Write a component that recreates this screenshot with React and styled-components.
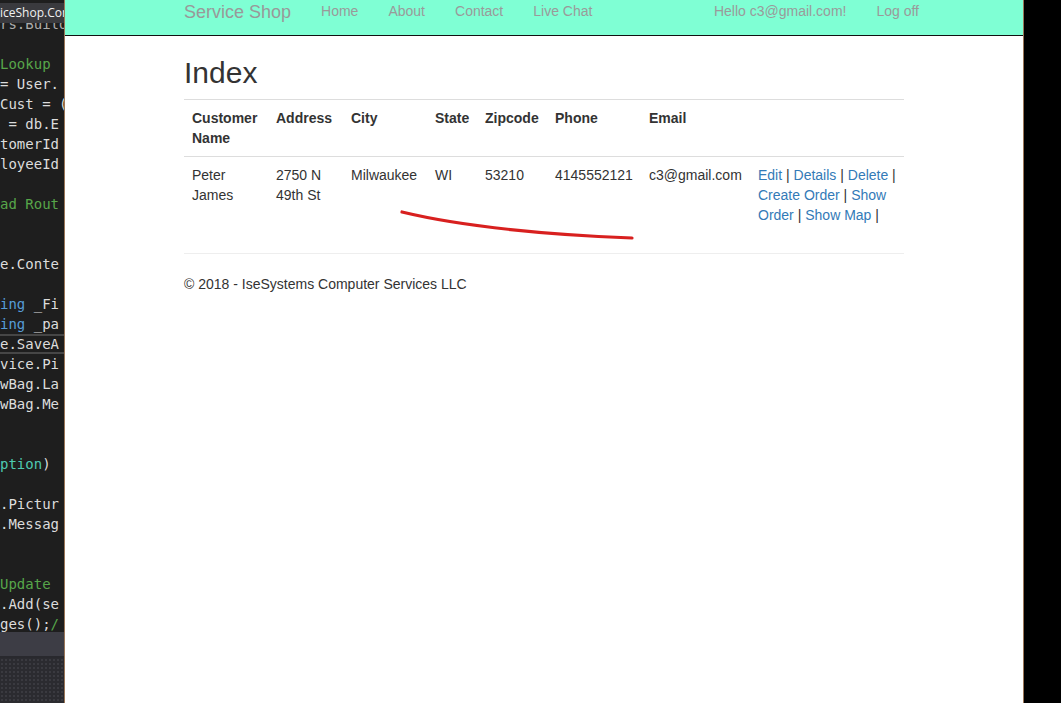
import React from "react"
import styled, { createGlobalStyle } from "styled-components"

const GlobalStyle = createGlobalStyle`
    html, body{
        margin: 0;
        padding: 0;
        height: 703px;
        overflow: hidden;
        background-color: #000000;
    }
    #root{
        height: 703px;
    }
`

const codeLines = [
    [],
    [["Lookup", "comment"]],
    [["= User.", "plain"]],
    [["Cust = (", "plain"]],
    [[" = db.E", "plain"]],
    [["tomerId", "plain"]],
    [["loyeeId", "plain"]],
    [],
    [["ad Rout", "comment"]],
    [],
    [],
    [["e.Conte", "plain"]],
    [],
    [["ing", "keyword"], [" _Fi", "plain"]],
    [["ing", "keyword"], [" _pa", "plain"]],
    [["e.SaveA", "plain"]],
    [["vice.Pi", "plain"]],
    [["wBag.La", "plain"]],
    [["wBag.Me", "plain"]],
    [],
    [],
    [["ption", "type"], [")", "plain"]],
    [],
    [[".Pictur", "plain"]],
    [[".Messag", "plain"]],
    [],
    [],
    [["Update", "comment"]],
    [[".Add(se", "plain"]],
    [["ges();", "plain"], ["/", "comment"]],
]

const colunas = [
    { titulo: "Customer Name", largura: 84 },
    { titulo: "Address", largura: 75 },
    { titulo: "City", largura: 84 },
    { titulo: "State", largura: 50 },
    { titulo: "Zipcode", largura: 70 },
    { titulo: "Phone", largura: 94 },
    { titulo: "Email", largura: 109 },
    { titulo: "", largura: 154 },
]

const customers = [
    {
        name: "Peter James",
        address: "2750 N 49th St",
        city: "Milwaukee",
        state: "WI",
        zip: "53210",
        phone: "4145552121",
        email: "c3@gmail.com",
    },
]

const acoes = ["Edit", "Details", "Delete", "Create Order", "Show Order", "Show Map"]

export default function App(){
    return(
        <>
            <GlobalStyle/>
            <Tela>
                <Editor>
                    <AbaEditor>iceShop.Con</AbaEditor>
                    <LinhaCortada><CodeLine>rs.Build</CodeLine></LinhaCortada>
                    <Codigo>
                        {codeLines.map((linha, i) => (
                            <CodeLine key={i} destaque={i === 15}>
                                {linha.map(([texto, tipo], j) => <Token key={j} tipo={tipo}>{texto}</Token>)}
                            </CodeLine>
                        ))}
                    </Codigo>
                    <BarraStatus/>
                    <Pontilhado/>
                </Editor>
                <Pagina>
                    <Navbar>
                        <NavInner>
                            <Marca>Service Shop</Marca>
                            <NavLink>Home</NavLink>
                            <NavLink>About</NavLink>
                            <NavLink>Contact</NavLink>
                            <NavLink>Live Chat</NavLink>
                            <NavDireita>
                                <NavLink>Hello c3@gmail.com!</NavLink>
                                <NavLink ultimo>Log off</NavLink>
                            </NavDireita>
                        </NavInner>
                    </Navbar>
                    <Conteudo>
                        <Titulo>Index</Titulo>
                        <Tabela>
                            <colgroup>
                                {colunas.map((c, i) => <col key={i} style={{ width: c.largura }}/>)}
                            </colgroup>
                            <tbody>
                                <tr>
                                    {colunas.map((c, i) => <Th key={i}>{c.titulo}</Th>)}
                                </tr>
                                {customers.map((c) => (
                                    <tr key={c.email}>
                                        <Td>{c.name}</Td>
                                        <Td>{c.address}</Td>
                                        <Td>{c.city}</Td>
                                        <Td>{c.state}</Td>
                                        <Td>{c.zip}</Td>
                                        <Td semQuebra>{c.phone}</Td>
                                        <Td semQuebra>{c.email}</Td>
                                        <Td>
                                            {acoes.map((a) => (
                                                <React.Fragment key={a}>
                                                    <Link href="#">{a}</Link> |{" "}
                                                </React.Fragment>
                                            ))}
                                        </Td>
                                    </tr>
                                ))}
                            </tbody>
                        </Tabela>
                        <Separador/>
                        <Rodape>© 2018 - IseSystems Computer Services LLC</Rodape>
                    </Conteudo>
                    <Risco width="958" height="703" viewBox="0 0 958 703">
                        <path d="M337 212 Q 420 232 567 238" fill="none" stroke="#d8201f" strokeWidth="3.2" strokeLinecap="round"/>
                    </Risco>
                </Pagina>
                <Fundo/>
            </Tela>
        </>
    )
}

const Tela = styled.div`
    display: flex;
    height: 703px;
    width: 1061px;
    overflow: hidden;
`

const Editor = styled.div`
    width: 64px;
    flex-shrink: 0;
    display: flex;
    flex-direction: column;
    background-color: #1e1e1e;
    border-right: 1px solid #9a7658;
    overflow: hidden;
    font-family: "DejaVu Sans Mono", "Liberation Mono", monospace;
`

const AbaEditor = styled.div`
    height: 20px;
    margin-top: 3px;
    background-color: #3a3a3e;
    color: #f1f1f1;
    font-family: "Open Sans", "Noto Sans", sans-serif;
    font-size: 12px;
    line-height: 20px;
    white-space: nowrap;
    overflow: hidden;
`

const LinhaCortada = styled.div`
    height: 11px;
    overflow: hidden;
    opacity: 0.75;
    & > div{
        margin-top: -9px;
    }
`

const Codigo = styled.div`
    height: 598px;
    overflow: hidden;
`

const CodeLine = styled.div`
    box-sizing: border-box;
    height: 20px;
    line-height: 20px;
    font-size: 14px;
    color: #dcdcdc;
    white-space: pre;
    overflow: hidden;
    ${(props) => props.destaque && `
        border-top: 2px solid #464646;
        border-bottom: 2px solid #464646;
        line-height: 16px;
    `}
`

const coresToken = {
    plain: "#dcdcdc",
    comment: "#57a64a",
    keyword: "#569cd6",
    type: "#4ec9b0",
}

const Token = styled.span`
    color: ${(props) => coresToken[props.tipo]};
`

const BarraStatus = styled.div`
    height: 24px;
    background-color: #3d3d45;
    border-bottom: 2px solid #29292e;
`

const Pontilhado = styled.div`
    flex: 1;
    background-color: #2b2b30;
    background-image: radial-gradient(#3a3a40 1px, transparent 1px);
    background-size: 4px 4px;
`

const Pagina = styled.div`
    position: relative;
    width: 958px;
    flex-shrink: 0;
    background-color: #ffffff;
    border-right: 1px solid #9a7658;
    font-family: "Liberation Sans", Arial, sans-serif;
    font-size: 14px;
    line-height: 20px;
    color: #333333;
`

const Navbar = styled.div`
    height: 35px;
    background-color: #7fffd4;
    border-bottom: 1px solid #111111;
`

const NavInner = styled.div`
    width: 750px;
    margin: 0 auto;
    display: flex;
    align-items: flex-start;
`

const Marca = styled.div`
    padding: 2px 15px 0 15px;
    font-size: 18px;
    line-height: 20px;
    color: #999999;
`

const NavLink = styled.div`
    padding: 1px 15px 0 15px;
    padding-right: ${(props) => props.ultimo ? "0" : "15px"};
    font-size: 14px;
    line-height: 20px;
    color: #9a9a9a;
    white-space: nowrap;
`

const NavDireita = styled.div`
    margin-left: auto;
    display: flex;
`

const Conteudo = styled.div`
    width: 720px;
    margin: 0 auto;
`

const Titulo = styled.h2`
    margin: 20px 0 10px 0;
    font-size: 30px;
    line-height: 33px;
    font-weight: 500;
`

const Tabela = styled.table`
    width: 100%;
    table-layout: fixed;
    border-collapse: collapse;
    border-spacing: 0;
    margin-bottom: 20px;
`

const Th = styled.th`
    padding: 8px;
    text-align: left;
    vertical-align: top;
    font-weight: bold;
    line-height: 20px;
    border-top: 1px solid #dddddd;
`

const Td = styled.td`
    padding: 8px;
    vertical-align: top;
    line-height: 20px;
    border-top: 1px solid #dddddd;
    white-space: ${(props) => props.semQuebra ? "nowrap" : "normal"};
`

const Link = styled.a`
    color: #337ab7;
    text-decoration: none;
`

const Separador = styled.hr`
    margin: 0 0 20px 0;
    border: 0;
    border-top: 1px solid #eeeeee;
`

const Rodape = styled.p`
    margin: 0 0 10px 0;
`

const Risco = styled.svg`
    position: absolute;
    top: 0;
    left: 0;
    pointer-events: none;
`

const Fundo = styled.div`
    flex: 1;
    background-color: #000000;
`
